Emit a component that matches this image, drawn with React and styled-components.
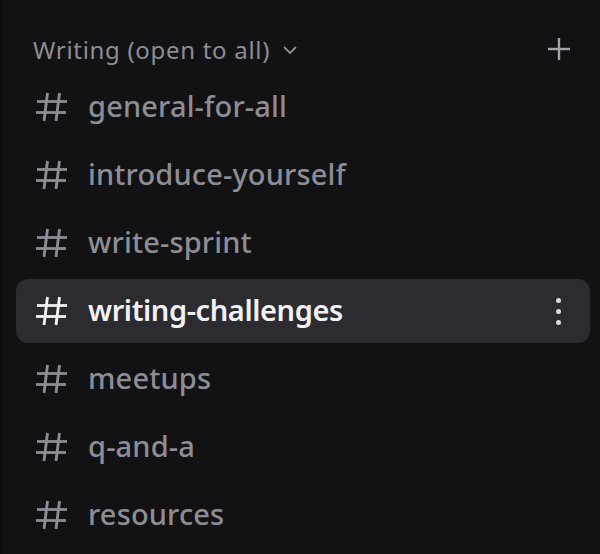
import React from 'react';
import styled, {createGlobalStyle} from 'styled-components';

const GlobalStyle = createGlobalStyle`
	html, body {
		margin: 0;
		padding: 0;
		background: #121214;
	}
	body {
		font-family: "Noto Sans", "Open Sans", sans-serif;
	}
`

const channels = [
	'general-for-all',
	'introduce-yourself',
	'write-sprint',
	'writing-challenges',
	'meetups',
	'q-and-a',
	'resources',
];

const ACTIVE = 'writing-challenges';

const Hash = ({color}) => (
	<svg width="36" height="36" viewBox="0 0 36 36" fill="none" stroke={color} strokeWidth="2.8" strokeLinecap="butt">
		<line x1="13.5" y1="4" x2="10" y2="32" />
		<line x1="25.5" y1="4" x2="22" y2="32" />
		<line x1="3" y1="12.5" x2="33" y2="12.5" />
		<line x1="2" y1="23.5" x2="32" y2="23.5" />
	</svg>
)

const Sidebar = () => {
	return (
		<Panel>
			<Header>
				<Category>
					Writing (open to all)
					<svg width="16" height="16" viewBox="0 0 16 16" fill="none" stroke="#8d8d96" strokeWidth="1.8">
						<polyline points="2,5 8,11 14,5" />
					</svg>
				</Category>
				<Plus>
					<svg width="26" height="26" viewBox="0 0 26 26" stroke="#a4a4ad" strokeWidth="2.4">
						<line x1="13" y1="2" x2="13" y2="24" />
						<line x1="2" y1="13" x2="24" y2="13" />
					</svg>
				</Plus>
			</Header>
			<List>
				{channels.map(name => {
					const active = name === ACTIVE;
					return (
						<Row key={name} $active={active}>
							<Hash color={active ? '#f2f2f4' : '#8d8d96'} />
							<Name $active={active}>{name}</Name>
							{active && (
								<Dots>
									<span /><span /><span />
								</Dots>
							)}
						</Row>
					)
				})}
			</List>
		</Panel>
	)
}

const Panel = styled.div`
	width: 600px;
	height: 554px;
	box-sizing: border-box;
	border-left: 2px solid #0c0c0e;
	padding: 27px 10px 0 14px;
	overflow: hidden;
`

const Header = styled.div`
	display: flex;
	align-items: center;
	justify-content: space-between;
	height: 44px;
	padding: 0 18px 0 17px;
`

const Category = styled.div`
	display: flex;
	align-items: center;
	gap: 12px;
	font-size: 24px;
	letter-spacing: 0.7px;
	color: #8d8d96;
	svg { margin-top: 2px; }
`

const Plus = styled.div`
	display: flex;
`

const List = styled.div`
	display: flex;
	flex-direction: column;
	gap: 4px;
	margin-top: 4px;
`

const Row = styled.div`
	display: flex;
	align-items: center;
	height: 64px;
	padding: 0 29px 0 18px;
	border-radius: 12px;
	background: ${p => p.$active ? '#2b2b30' : 'transparent'};
`

const Name = styled.span`
	margin-left: 18px;
	font-size: 29px;
	font-weight: ${p => p.$active ? 600 : 500};
	letter-spacing: ${p => p.$active ? '-0.4px' : '0.15px'};
	color: ${p => p.$active ? '#f2f2f4' : '#8d8d96'};
	flex: 1;
	padding-bottom: 3px;
`

const Dots = styled.div`
	display: flex;
	flex-direction: column;
	gap: 6px;
	span {
		width: 5px;
		height: 5px;
		border-radius: 50%;
		background: #dcdce0;
	}
`

export default function App() {
	return (
		<>
			<GlobalStyle />
			<Sidebar />
		</>
	)
}
